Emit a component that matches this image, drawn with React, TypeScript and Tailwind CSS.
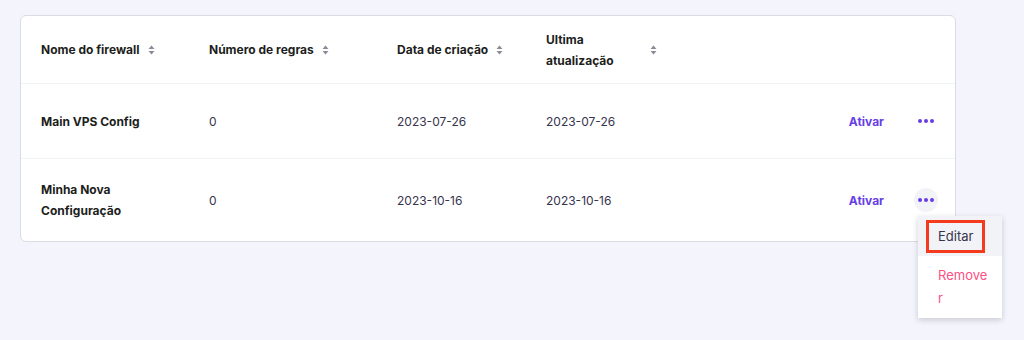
import React from "react";

function SortIcon() {
  return (
    <svg width="7" height="10" viewBox="0 0 7 10" className="shrink-0">
      <path d="M3.5 0.5 L6.5 4 L0.5 4 Z" fill="#8a8a99" />
      <path d="M3.5 9.5 L6.5 6 L0.5 6 Z" fill="#8a8a99" />
    </svg>
  );
}

function Dots({ active }: { active?: boolean }) {
  return (
    <div
      className={
        "flex h-[24px] w-[24px] items-center justify-center gap-[2px] rounded-full " +
        (active ? "bg-[#f2f3f6]" : "")
      }
    >
      <span className="h-[4px] w-[4px] rounded-full bg-[#673de6]" />
      <span className="h-[4px] w-[4px] rounded-full bg-[#673de6]" />
      <span className="h-[4px] w-[4px] rounded-full bg-[#673de6]" />
    </div>
  );
}

const rows = [
  { name: "Main VPS Config", rules: "0", created: "2023-07-26", updated: "2023-07-26" },
  { name: "Minha Nova Configuração", rules: "0", created: "2023-10-16", updated: "2023-10-16" },
];

export default function App() {
  return (
    <div
      className="relative h-[340px] w-[1024px] bg-[#f4f4fd] pl-[20px] pt-[15px] text-[12px] text-[#36344d]"
      style={{ fontFamily: "Inter, 'Noto Sans', sans-serif" }}
    >
      <div className="w-[936px] rounded-[6px] border border-[#dadce0] bg-white">
        <div className="flex h-[68px] items-center border-b border-[#f2f3f6] pl-[20px] font-bold text-[#1d1e20] leading-[21px]">
          <div className="flex w-[168px] items-center gap-2">
            <span>Nome do firewall</span>
            <SortIcon />
          </div>
          <div className="flex w-[188px] items-center gap-2">
            <span>Número de regras</span>
            <SortIcon />
          </div>
          <div className="flex w-[149px] items-center gap-2">
            <span>Data de criação</span>
            <SortIcon />
          </div>
          <div className="flex items-center gap-2">
            <span className="w-[96px]">Ultima atualização</span>
            <SortIcon />
          </div>
        </div>
        {rows.map((r, i) => (
          <div
            key={r.name}
            className={
              "flex items-center py-[20px] pl-[20px] pr-[17px] leading-[21px] " +
              (i === 0 ? "h-[75px] border-b border-[#f2f3f6]" : "h-[82px]")
            }
          >
            <div className="w-[168px] pr-4 font-bold text-[#1d1e20]">
              <span className={i === 1 ? "block w-[100px]" : ""}>{r.name}</span>
            </div>
            <div className="w-[188px]">{r.rules}</div>
            <div className="w-[149px]">{r.created}</div>
            <div className="flex-1">{r.updated}</div>
            <div className="font-bold text-[#673de6]">Ativar</div>
            <div className="ml-[30px]">
              <Dots active={i === 1} />
            </div>
          </div>
        ))}
      </div>

      <div className="absolute left-[918px] top-[216px] w-[84px] bg-white shadow-[0_2px_6px_rgba(29,30,32,0.2)] text-[13px]">
        <div className="relative h-[40px] bg-[#f2f3f6] pl-[20px] leading-[40px] text-[#36344d]">
          Editar
          <div className="absolute left-[8px] top-[4px] h-[33px] w-[59px] border-[3px] border-[#f43b1e]" />
        </div>
        <div className="break-all pl-[20px] pr-[14px] py-[8px] leading-[23px] text-[#fc5185]">Remover</div>
      </div>
    </div>
  );
}
